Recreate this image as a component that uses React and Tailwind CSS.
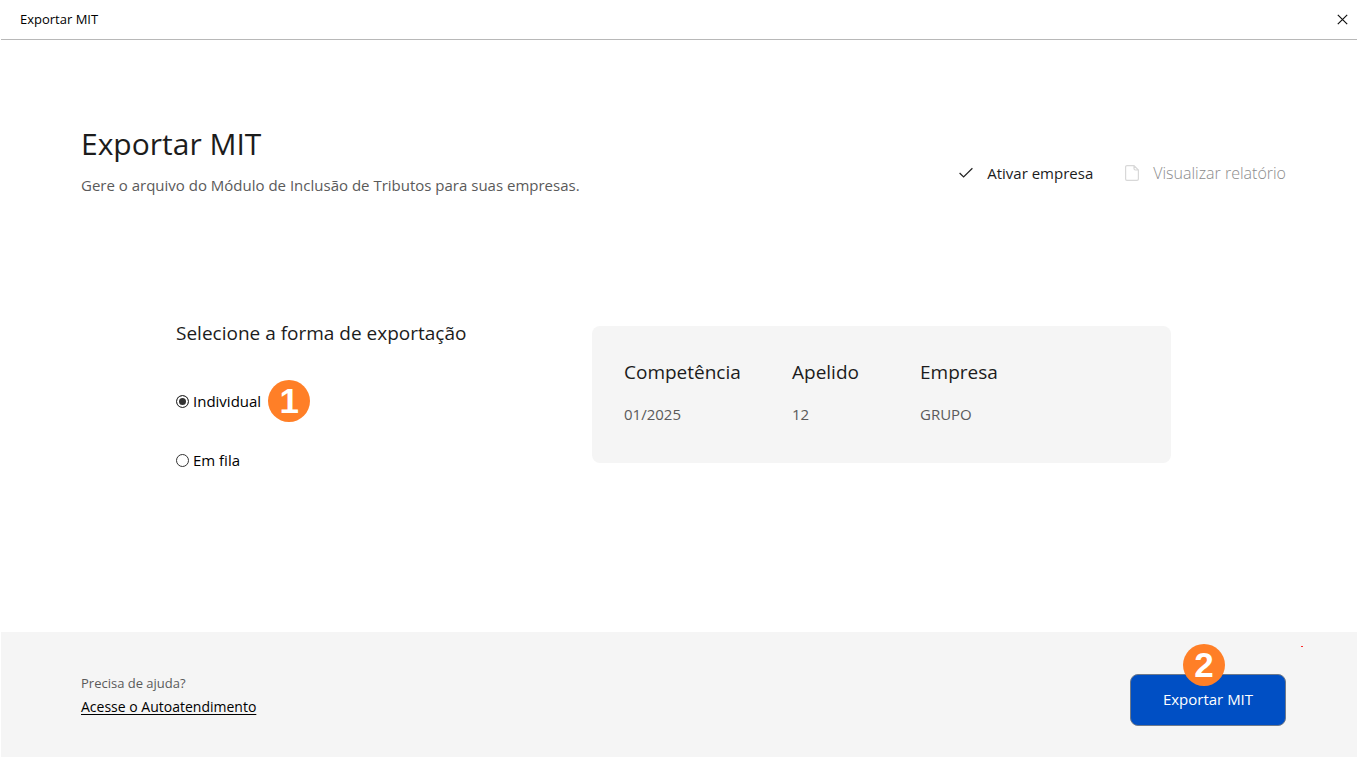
import { useState } from "react";

function StepBadge({ children }) {
  return (
    <span className="flex size-[42px] items-center justify-center rounded-full bg-[#ff7f27] pb-0.5 font-['Liberation_Sans',sans-serif] text-[35px] leading-none font-bold text-white">
      {children}
    </span>
  );
}

function CloseIcon() {
  return (
    <svg viewBox="0 0 11 11" className="size-[11px]" fill="none" stroke="#111" strokeWidth="1.2">
      <path d="M.8.8 10.2 10.2M10.2.8.8 10.2" />
    </svg>
  );
}

function CheckIcon() {
  return (
    <svg viewBox="0 0 14 14" className="size-[14px]" fill="none" stroke="#222" strokeWidth="1.2">
      <path d="M.6 7 4.6 11 13.4 2.3" />
    </svg>
  );
}

function FileIcon() {
  return (
    <svg viewBox="0 0 14 16" className="h-4 w-[14px]" fill="none" stroke="#d8d8d8" strokeWidth="1.2">
      <path d="M9 .6H2A1.4 1.4 0 0 0 .6 2v12A1.4 1.4 0 0 0 2 15.4h10a1.4 1.4 0 0 0 1.4-1.4V5zM9 .6v3A1.4 1.4 0 0 0 10.4 5h3" />
    </svg>
  );
}

function ModeOption({ value, label, mode, onChange, badge }) {
  return (
    <div className="flex h-[42px] items-center gap-[7px]">
      <label className="flex items-center gap-1 text-[15px] text-black">
        <input
          type="radio"
          name="mode"
          value={value}
          checked={mode === value}
          onChange={() => onChange(value)}
          className="size-[13px] appearance-none rounded-full border border-[#333] bg-white checked:bg-[#333] checked:shadow-[inset_0_0_0_2px_white]"
        />
        {label}
      </label>
      {badge && <StepBadge>{badge}</StepBadge>}
    </div>
  );
}

const company = [
  { title: "Competência", value: "01/2025", width: "w-[168px]" },
  { title: "Apelido", value: "12", width: "w-32" },
  { title: "Empresa", value: "GRUPO", width: "" },
];

export default function App() {
  const [mode, setMode] = useState("individual");

  return (
    <div className="flex min-h-screen flex-col bg-white pl-px font-['Open_Sans',sans-serif] text-[#1c1c1c]">
      <header className="flex h-10 items-center justify-between border-b border-[#b8b8b8] pr-[9px] pl-[19px]">
        <span className="text-[13px] text-black">Exportar MIT</span>
        <button type="button" aria-label="Fechar">
          <CloseIcon />
        </button>
      </header>

      <main className="grow pt-[81px]">
        <div className="flex items-start justify-between pr-[71px] pl-20">
          <div>
            <h1 className="text-[30px] leading-[46px]">Exportar MIT</h1>
            <p className="mt-1 text-[15px] leading-7 text-[#5a5a5a]">
              Gere o arquivo do Módulo de Inclusão de Tributos para suas empresas.
            </p>
          </div>
          <div className="mt-10 flex items-center gap-8 text-[15px] leading-6">
            <button type="button" className="flex items-center gap-[14px]">
              <CheckIcon />
              Ativar empresa
            </button>
            <button type="button" disabled className="flex items-center gap-[14px]">
              <FileIcon />
              <span className="text-base font-light text-[#8c8c8c]">Visualizar relatório</span>
            </button>
          </div>
        </div>

        <div className="mt-[127px] flex items-start pr-[186px] pl-[175px]">
          <fieldset className="w-[416px] shrink-0">
            <legend className="text-[19px] leading-[14px]">Selecione a forma de exportação</legend>
            <div className="mt-10 flex flex-col gap-[17px]">
              <ModeOption value="individual" label="Individual" mode={mode} onChange={setMode} badge="1" />
              <ModeOption value="fila" label="Em fila" mode={mode} onChange={setMode} />
            </div>
          </fieldset>
          <dl className="flex grow rounded-lg bg-[#f5f5f5] px-8 pt-8 pb-[37px]">
            {company.map((item) => (
              <div key={item.title} className={item.width}>
                <dt className="text-[19px] leading-7">{item.title}</dt>
                <dd className="mt-4 text-[15px] leading-6 text-[#5a5a5a]">{item.value}</dd>
              </div>
            ))}
          </dl>
        </div>
      </main>

      <footer className="flex h-[125px] items-center justify-between bg-[#f5f5f5] pr-[71px] pl-20">
        <div>
          <p className="text-[13px] leading-6 text-[#5a5a5a]">Precisa de ajuda?</p>
          <a href="#autoatendimento" className="block text-sm leading-6 text-black underline underline-offset-2">
            Acesse o Autoatendimento
          </a>
        </div>
        <div className="relative mt-[11px]">
          <button
            type="button"
            className="h-[52px] w-[156px] rounded-lg border border-[#6f7a8a] bg-[#004fc4] pb-0.5 text-[15px] text-white"
          >
            Exportar MIT
          </button>
          <div className="absolute -top-[30px] left-[53px]">
            <StepBadge>2</StepBadge>
          </div>
          <span className="absolute -top-7 -right-[17px] h-px w-0.5 bg-[#ff2a2a]" />
        </div>
      </footer>
    </div>
  );
}
